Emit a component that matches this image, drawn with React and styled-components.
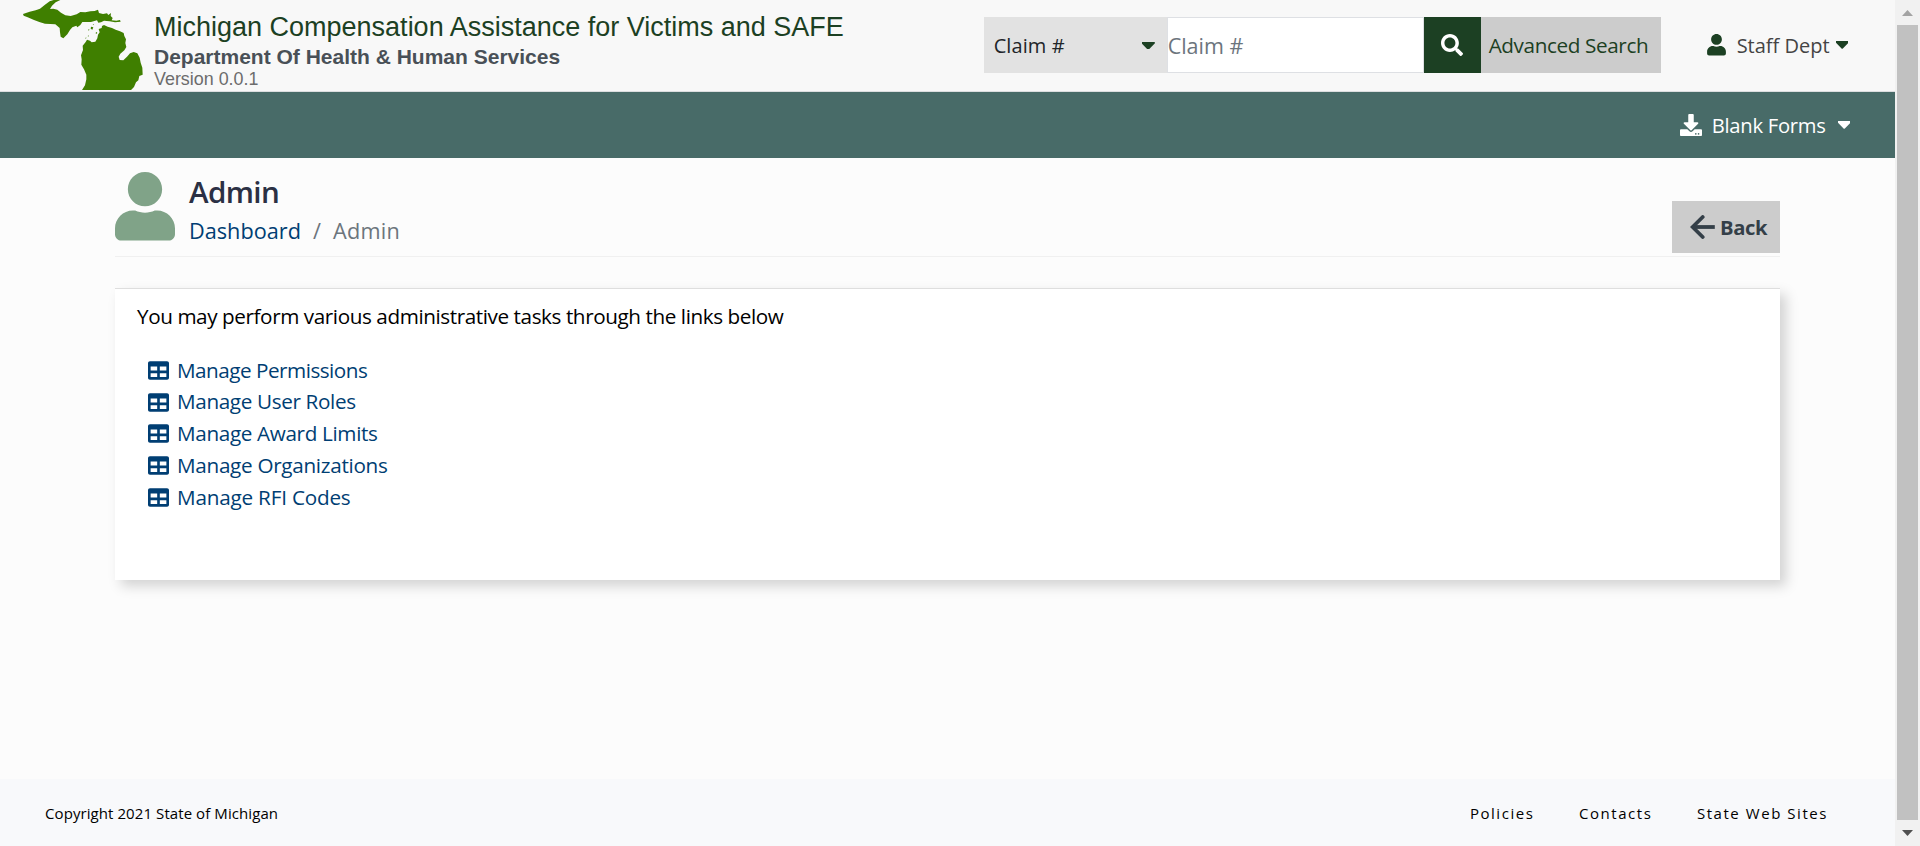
import React from 'react';
import styled, { createGlobalStyle } from 'styled-components';
import { FaDownload, FaSearch, FaTable, FaUser } from 'react-icons/fa';

const GlobalStyle = createGlobalStyle`
  * { box-sizing: border-box; }
  body {
    margin: 0;
    overflow: hidden;
    background: #fcfcfc;
    color: #000;
    font-family: "Segoe UI", "Open Sans", sans-serif;
    font-size: 20.7px;
  }
  a { color: inherit; text-decoration: none; }
  svg { display: block; flex: none; }
`;

const Window = styled.div`
  display: flex;
  width: 100%;
  height: 846px;
`;

const Page = styled.div`
  flex: 1;
  min-width: 0;
  display: flex;
  flex-direction: column;
`;

const Header = styled.header`
  display: flex;
  align-items: flex-start;
  height: 92px;
  padding: 0 47px 0 23px;
  background: #f8f8f8;
  border-bottom: 1px solid #dcdee0;
`;

const StateLogo = styled.svg`
  width: 120px;
  height: 90px;
  fill: #3f7f00;
`;

const Brand = styled.div`
  margin-left: 11px;
  padding-top: 12px;
  font-family: "Liberation Sans", Arial, sans-serif;
  white-space: nowrap;
`;

const BrandTitle = styled.div`
  color: #1c4023;
  font-size: 27px;
  line-height: 30px;
`;

const Department = styled.div`
  margin-top: 3px;
  color: #495057;
  font-size: 21px;
  font-weight: 700;
  line-height: 24px;
`;

const Version = styled.div`
  color: #6c6c6c;
  font-size: 17.9px;
  line-height: 20px;
`;

const SearchBar = styled.form`
  display: flex;
  height: 56px;
  margin: 17px 0 0 auto;
`;

const SearchType = styled.button`
  display: flex;
  align-items: center;
  justify-content: space-between;
  width: 183px;
  padding: 1px 12px 0 10px;
  border: 0;
  background: #e2e2e2;
  color: #212529;
  font: 20px "Open Sans", sans-serif;
  letter-spacing: 0.1px;
`;

const SearchInput = styled.input`
  width: 257px;
  padding: 0;
  border: 1px solid #dee0e4;
  border-radius: 0;
  background: #fff;
  font: 21.5px "Open Sans", sans-serif;
  letter-spacing: 0;
  &::placeholder { color: #6c757d; opacity: 1; }
`;

const SearchButton = styled.button`
  display: flex;
  align-items: center;
  justify-content: center;
  width: 57px;
  padding: 0;
  border: 0;
  background: #1c4023;
  color: #fff;
  svg { width: 22px; height: 22px; }
`;

const AdvancedSearch = styled.a`
  width: 180px;
  padding-left: 8px;
  background: #ccc;
  color: #1c4023;
  line-height: 57px;
  letter-spacing: -0.38px;
  white-space: nowrap;
`;

const UserMenu = styled.a`
  display: flex;
  align-items: center;
  height: 56px;
  margin: 17px 0 0 46px;
  color: #444;
  font-size: 20px;
  white-space: nowrap;
`;

const UserIcon = styled(FaUser)`
  width: ${(p) => p.$width}px;
  height: ${(p) => p.$height}px;
  margin-right: ${(p) => p.$gap}px;
  color: ${(p) => p.$color};
`;

const UserName = styled.span`
  padding-top: 1px;
`;

const CaretSvg = styled.svg`
  width: 12.4px;
  height: 7.7px;
  margin-left: ${(p) => p.$gap || 0}px;
  fill: ${(p) => p.$color || '#1c4023'};
`;

const Navbar = styled.nav`
  display: flex;
  align-items: center;
  justify-content: flex-end;
  height: 66px;
  padding-right: 45px;
  background: #486b68;
`;

const NavItem = styled.a`
  display: flex;
  align-items: center;
  color: #fff;
  font-size: 20.2px;
  letter-spacing: -0.25px;
  white-space: nowrap;
`;

const NavDownload = styled(FaDownload)`
  width: 22px;
  height: 22px;
  margin-right: 10px;
`;

const Main = styled.main`
  flex: 1;
  padding: 14px 115px 0;
`;

const PageHeading = styled.div`
  display: flex;
  align-items: flex-start;
  height: 85px;
  border-bottom: 1px solid #f0f0f0;
`;

const PageTitle = styled.h1`
  margin: 2px 0 5px;
  color: #2b3044;
  font-size: 29.6px;
  font-weight: 600;
  line-height: 36px;
  letter-spacing: -0.65px;
`;

const Breadcrumb = styled.div`
  display: flex;
  gap: 12px;
  color: #6c757d;
  font-size: 21.7px;
  line-height: 32px;
  a { color: #003e73; }
  span:last-child { letter-spacing: 0.3px; }
`;

const BackButton = styled.button`
  display: flex;
  align-items: center;
  gap: 5px;
  width: 108px;
  height: 52px;
  margin: 29px 0 0 auto;
  padding: 0 0 0 18px;
  border: 0;
  background: #ccc;
  color: #343f48;
  font: 700 20.2px "Open Sans", sans-serif;
  letter-spacing: -0.35px;
`;

const ArrowSvg = styled.svg`
  width: 25px;
  height: 24px;
  fill: none;
  stroke: currentColor;
  stroke-width: 3.8;
`;

const Card = styled.section`
  height: 292px;
  margin-top: 31px;
  padding: 11px 22px 0;
  border-top: 1px solid #dedede;
  background: #fff;
  box-shadow: 6px 6px 12px rgba(0, 0, 0, 0.17);
`;

const Intro = styled.p`
  margin: 0;
  line-height: 32px;
  letter-spacing: -0.42px;
`;

const LinkList = styled.ul`
  margin: 22.5px 0 0;
  padding: 0 0 0 11px;
  list-style: none;
`;

const LinkRow = styled.li`
  height: 31.75px;
  letter-spacing: ${(p) => p.$tracking}px;
  a {
    display: flex;
    align-items: center;
    width: max-content;
    color: #003e73;
    line-height: 31.75px;
  }
  svg { width: 21px; height: 21px; margin-right: 8px; }
`;

const Footer = styled.footer`
  display: flex;
  align-items: center;
  gap: 44.5px;
  height: 67px;
  padding: 0 67px 0 45px;
  background: #f8f9fb;
  font-size: 15px;
`;

const Copyright = styled.span`
  margin-right: auto;
  letter-spacing: 0.08px;
`;

const FooterLink = styled.a`
  letter-spacing: 1.55px;
  white-space: nowrap;
`;

const Scrollbar = styled.div`
  display: flex;
  flex-direction: column;
  align-items: center;
  width: 25px;
  padding-top: 10px;
  background: #f1f1f1;
`;

const ScrollThumb = styled.div`
  width: 21px;
  height: 795px;
  margin: 9px 0 10px;
  background: #c1c1c1;
`;

const ScrollArrow = styled.svg`
  width: 11px;
  height: 6px;
  fill: ${(p) => p.$color};
`;

const Caret = ({ gap, color }) => (
  <CaretSvg viewBox="24 192 272 168" preserveAspectRatio="none" $gap={gap} $color={color}>
    <path d="M31.3 192h257.3c17.8 0 26.7 21.5 14.1 34.1L174.1 354.8c-7.8 7.8-20.5 7.8-28.3 0L17.2 226.1C4.6 213.5 13.5 192 31.3 192z" />
  </CaretSvg>
);

const LINKS = [
  { label: 'Manage Permissions', tracking: -0.5 },
  { label: 'Manage User Roles', tracking: -0.36 },
  { label: 'Manage Award Limits', tracking: -0.35 },
  { label: 'Manage Organizations', tracking: -0.3 },
  { label: 'Manage RFI Codes', tracking: -0.2 },
];

export default function App() {
  return (
    <>
      <GlobalStyle />
      <Window>
        <Page>
          <Header>
            <StateLogo viewBox="24 0 360 270" aria-label="Michigan">
              <path d="M24 42L44 35L62 31L75 26L88 16L104 4L116 0H136L122 7L111 17L105 27L115 26L127 29L138 38L151 46L167 48L185 43L196 36L211 37L226 34L239 33L249 29L252 39L264 42L276 40L280 45L288 39L287 48L293 54L290 61L304 62L315 60L317 65L300 67L284 64L267 62L258 67L250 68L246 61L228 66L213 66L202 66L196 75L187 82L184 77L172 82L165 90L157 103L145 115L137 110L135 97L134 84L121 73L106 72L90 71L73 66L57 60L38 52L26 47Z" />
              <path d="M261 78L267 75L278 80L291 84L302 89L315 94L326 99L328 108L333 118L331 129L334 141L328 151L316 161L311 170L314 180L325 181L336 170L345 160L356 156L367 160L374 173L377 188L382 203L383 224L373 228L370 241L363 247L357 261L348 270H201L210 256L214 238L214 224L207 208L199 194L200 178L198 166L204 150L203 137L212 126L216 119L225 122L230 127L241 125L247 115L249 104L254 97L251 87L260 84Z" />
              <path d="M228 80l7 2-3 7-5-3zM233 73l3-1 0 4zM221 87l2 1-1 4-2-1zM211 114l3-2-1 5zM218 108l4-2-2 4zM242 98l3-2 2 3-4 3z" />
            </StateLogo>
            <Brand>
              <BrandTitle>Michigan Compensation Assistance for Victims and SAFE</BrandTitle>
              <Department>Department Of Health &amp; Human Services</Department>
              <Version>Version 0.0.1</Version>
            </Brand>
            <SearchBar>
              <SearchType type="button">
                Claim #
                <Caret />
              </SearchType>
              <SearchInput placeholder="Claim #" />
              <SearchButton type="button" aria-label="Search">
                <FaSearch />
              </SearchButton>
              <AdvancedSearch href="#">Advanced Search</AdvancedSearch>
            </SearchBar>
            <UserMenu href="#">
              <UserIcon $width={19} $height={21.5} $gap={11} $color="#1c4023" />
              <UserName>Staff Dept</UserName>
              <Caret gap={6} />
            </UserMenu>
          </Header>
          <Navbar>
            <NavItem href="#">
              <NavDownload />
              Blank Forms
              <Caret gap={12} color="#fff" />
            </NavItem>
          </Navbar>
          <Main>
            <PageHeading>
              <UserIcon $width={60} $height={68.6} $gap={14} $color="#80a388" />
              <div>
                <PageTitle>Admin</PageTitle>
                <Breadcrumb>
                  <a href="#">Dashboard</a>
                  <span>/</span>
                  <span>Admin</span>
                </Breadcrumb>
              </div>
              <BackButton type="button">
                <ArrowSvg viewBox="0 0 25 24">
                  <path d="M12.7 2L2.6 12L12.7 22" strokeLinecap="round" />
                  <path d="M3 12H24.8" />
                </ArrowSvg>
                Back
              </BackButton>
            </PageHeading>
            <Card>
              <Intro>You may perform various administrative tasks through the links below</Intro>
              <LinkList>
                {LINKS.map(({ label, tracking }) => (
                  <LinkRow key={label} $tracking={tracking}>
                    <a href="#">
                      <FaTable />
                      {label}
                    </a>
                  </LinkRow>
                ))}
              </LinkList>
            </Card>
          </Main>
          <Footer>
            <Copyright>Copyright 2021 State of Michigan</Copyright>
            <FooterLink href="#">Policies</FooterLink>
            <FooterLink href="#">Contacts</FooterLink>
            <FooterLink href="#">State Web Sites</FooterLink>
          </Footer>
        </Page>
        <Scrollbar>
          <ScrollArrow viewBox="0 0 11 6" $color="#a3a3a3"><path d="M0 6L5.5 0L11 6Z" /></ScrollArrow>
          <ScrollThumb />
          <ScrollArrow viewBox="0 0 11 6" $color="#505050"><path d="M0 0L5.5 6L11 0Z" /></ScrollArrow>
        </Scrollbar>
      </Window>
    </>
  );
}
